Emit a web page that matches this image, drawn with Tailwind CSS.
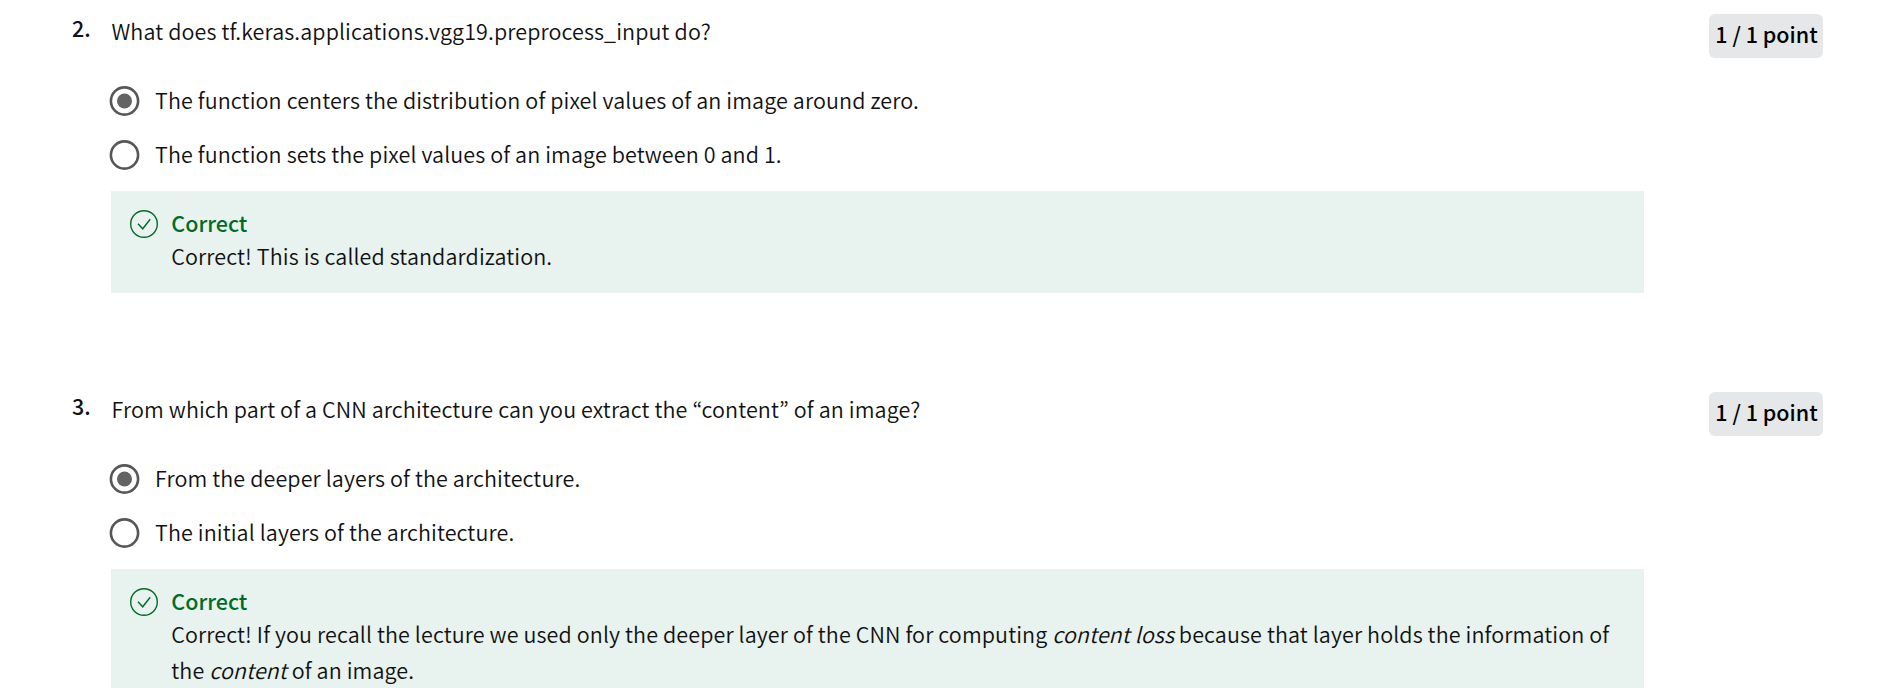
<!DOCTYPE html>
<html lang="en"><head><meta charset="utf-8"><title>Quiz</title>
<script src="https://cdn.jsdelivr.net/npm/@tailwindcss/browser@4"></script></head>
<body class="h-[688px] overflow-hidden bg-white font-['Noto_Sans_CJK_KR','Noto_Sans',sans-serif] text-[21.5px] text-[#111111]">
<main class="h-[688px] overflow-hidden">
  <section class="flex h-[378px] items-start pl-[72px]">
    <div class="w-[39px] shrink-0 pt-[10px] font-medium leading-9">2.</div>
    <div class="w-[1533px] shrink-0 pt-[13px]">
      <h2 class="pl-[0.5px] font-[350] leading-9 tracking-[0.11px]">What does tf.keras.applications.vgg19.preprocess_input do?</h2>
      <div class="mt-[37px] flex flex-col gap-6 font-[350] tracking-[0.11px]">
        <label class="flex h-[30px] items-center gap-4">
          <svg class="-ml-px size-[30px] shrink-0 overflow-visible" viewBox="0 0 30 30"><circle cx="14.5" cy="15" r="13.6" fill="none" stroke="#575757" stroke-width="2.6"/><circle cx="14.5" cy="15" r="7.5" fill="#636363"/></svg>
          <span class="-ml-px pb-[3px] leading-[30px]">The function centers the distribution of pixel values of an image around zero.</span>
        </label>
        <label class="flex h-[30px] items-center gap-4">
          <svg class="-ml-px size-[30px] shrink-0 overflow-visible" viewBox="0 0 30 30"><circle cx="14.5" cy="15" r="13.6" fill="none" stroke="#575757" stroke-width="2.6"/></svg>
          <span class="-ml-px pb-[3px] leading-[30px]">The function sets the pixel values of an image between 0 and 1.</span>
        </label>
      </div>
      <div class="mt-[21px] flex h-[102px] items-start bg-[#e8f2ee] pl-[19px]">
        <svg class="mt-[19px] size-[28px] shrink-0" viewBox="0 0 28 28" fill="none" stroke="#006d27" stroke-width="1.4"><circle cx="14" cy="14" r="13.3"/><path d="M8 13.7 12.7 18.8 20.2 9.2"/></svg>
        <div class="ml-[13.3px] pt-[16px]">
          <div class="font-medium leading-8 text-[#006b27]">Correct</div>
          <p class="-mt-px font-[350] leading-9 tracking-[0.11px]">Correct! This is called standardization.</p>
        </div>
      </div>
    </div>
    <div class="ml-[65px] mt-[14px] h-[44px] w-[114px] shrink-0 rounded-md bg-[#e5e7e8] pl-px text-center font-medium leading-10 text-black">1 / 1 point</div>
  </section>
  <section class="flex h-[378px] items-start pl-[72px]">
    <div class="w-[39px] shrink-0 pt-[10px] font-medium leading-9">3.</div>
    <div class="w-[1533px] shrink-0 pt-[13px]">
      <h2 class="pl-[0.5px] font-[350] leading-9 tracking-[0.11px]">From which part of a CNN architecture can you extract the “content” of an image?</h2>
      <div class="mt-[37px] flex flex-col gap-6 font-[350] tracking-[0.11px]">
        <label class="flex h-[30px] items-center gap-4">
          <svg class="-ml-px size-[30px] shrink-0 overflow-visible" viewBox="0 0 30 30"><circle cx="14.5" cy="15" r="13.6" fill="none" stroke="#575757" stroke-width="2.6"/><circle cx="14.5" cy="15" r="7.5" fill="#636363"/></svg>
          <span class="-ml-px pb-[3px] leading-[30px]">From the deeper layers of the architecture.</span>
        </label>
        <label class="flex h-[30px] items-center gap-4">
          <svg class="-ml-px size-[30px] shrink-0 overflow-visible" viewBox="0 0 30 30"><circle cx="14.5" cy="15" r="13.6" fill="none" stroke="#575757" stroke-width="2.6"/></svg>
          <span class="-ml-px pb-[3px] leading-[30px]">The initial layers of the architecture.</span>
        </label>
      </div>
      <div class="mt-[21px] flex h-[138px] items-start bg-[#e8f2ee] pl-[19px]">
        <svg class="mt-[19px] size-[28px] shrink-0" viewBox="0 0 28 28" fill="none" stroke="#006d27" stroke-width="1.4"><circle cx="14" cy="14" r="13.3"/><path d="M8 13.7 12.7 18.8 20.2 9.2"/></svg>
        <div class="ml-[13.3px] pt-[16px]">
          <div class="font-medium leading-8 text-[#006b27]">Correct</div>
          <p class="-mt-px font-[350] leading-9 tracking-[0.11px]">Correct! If you recall the lecture we used only the deeper layer of the CNN for computing <em>content loss</em> because that layer holds the information of<br>the <em>content</em> of an image.</p>
        </div>
      </div>
    </div>
    <div class="ml-[65px] mt-[14px] h-[44px] w-[114px] shrink-0 rounded-md bg-[#e5e7e8] pl-px text-center font-medium leading-10 text-black">1 / 1 point</div>
  </section>
</main>
</body></html>
